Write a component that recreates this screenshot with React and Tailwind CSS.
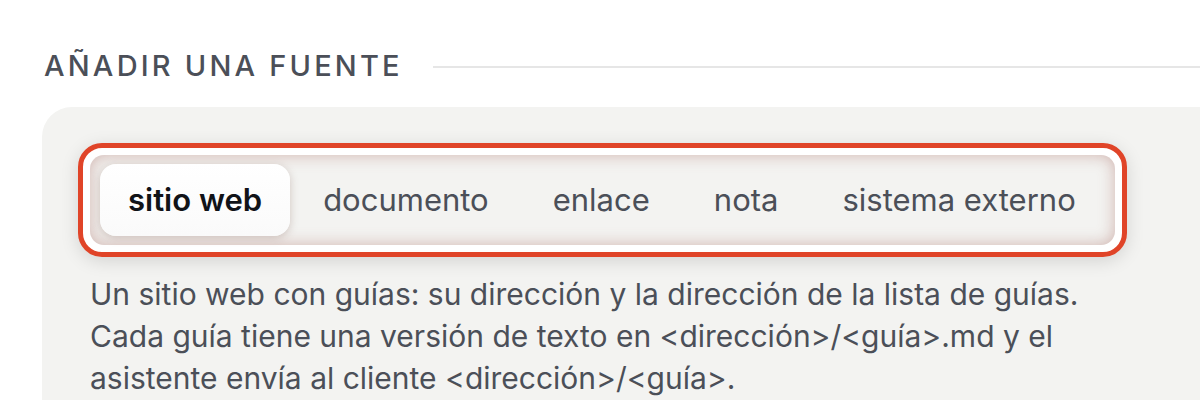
import React, { useState } from "react";

const tabs = ["sitio web", "documento", "enlace", "nota", "sistema externo"];

export default function App() {
  const [active, setActive] = useState("sitio web");

  return (
    <div className="min-h-screen bg-white font-['Inter',sans-serif] overflow-hidden">
      {/* heading with rule */}
      <div className="flex items-center gap-[30px] pl-[44px] pt-[47px]">
        <h2 className="text-[29px] leading-[38px] font-medium tracking-[0.11em] text-[#4b4f58] whitespace-nowrap">
          AÑADIR UNA FUENTE
        </h2>
        <div className="flex-1 h-[2px] bg-[#e6e6e6] mt-[2px]" />
      </div>

      {/* card */}
      <div className="ml-[42px] mt-[22px] w-[1200px] rounded-tl-[30px] bg-[#f3f3f1] pt-[36px] pl-[36px] pb-[40px]">
        <div className="inline-block rounded-[24px] border-[5px] border-[#e04428] bg-white p-[7px] shadow-[0_4px_18px_rgba(0,0,0,0.13)]">
          <div
            role="tablist"
            className="flex gap-[2px] rounded-[14px] bg-[#f3f3f1] py-[9px] pl-[10px] pr-[8px] shadow-[inset_0_0_16px_rgba(160,90,80,0.42)]"
          >
            {tabs.map((t) =>
              t === active ? (
                <button
                  key={t}
                  onClick={() => setActive(t)}
                  className="h-[72px] rounded-[16px] bg-gradient-to-b from-white to-[#fafafa] px-[28px] text-[31px] font-semibold text-[#111318] shadow-[0_2px_9px_rgba(120,80,70,0.28)]"
                >
                  {t}
                </button>
              ) : (
                <button
                  key={t}
                  onClick={() => setActive(t)}
                  className="h-[72px] rounded-[16px] px-[31px] text-[31px] text-[#4b4f58]"
                >
                  {t}
                </button>
              )
            )}
          </div>
        </div>

        <p className="mt-[16px] pl-[12px] text-[30px] leading-[42px] text-[#4b4f58] whitespace-nowrap">
          Un sitio web con guías: su dirección y la dirección de la lista de guías.
          <br />
          Cada guía tiene una versión de texto en &lt;dirección&gt;/&lt;guía&gt;.md y el
          <br />
          asistente envía al cliente &lt;dirección&gt;/&lt;guía&gt;.
        </p>
      </div>
    </div>
  );
}
